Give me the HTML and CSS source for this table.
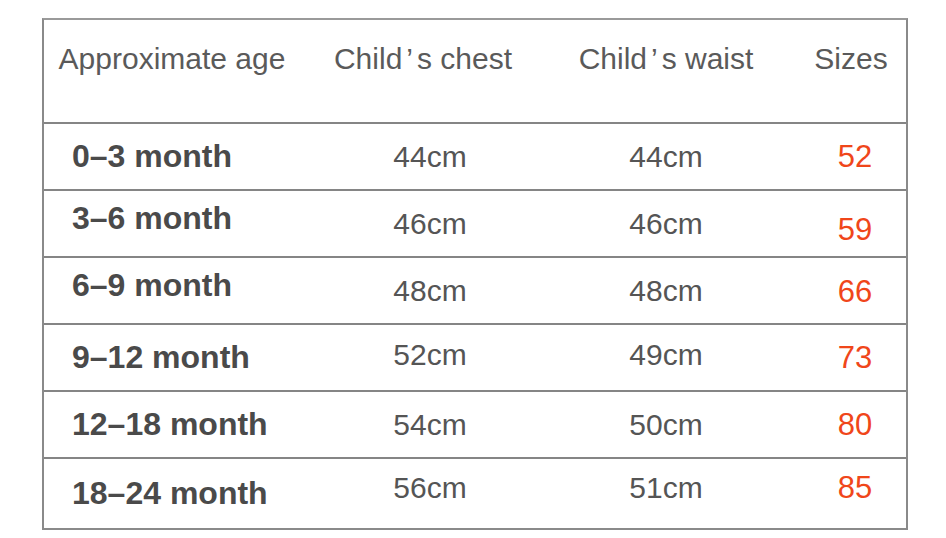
FILE: index.html
```html
<!DOCTYPE html>
<html lang="en">
<head>
<meta charset="utf-8">
<title>Size chart</title>
<link rel="stylesheet" href="styles.css">
</head>
<body>
<div class="chart">
  <div class="row head">
    <div class="cell c-age">Approximate age</div>
    <div class="cell c-chest">Child<span class="apos">’</span>s chest</div>
    <div class="cell c-waist">Child<span class="apos">’</span>s waist</div>
    <div class="cell c-size">Sizes</div>
  </div>
  <div class="row r1">
    <div class="cell c-age">0–3 month</div>
    <div class="cell c-chest">44cm</div>
    <div class="cell c-waist">44cm</div>
    <div class="cell c-size">52</div>
  </div>
  <div class="row r2">
    <div class="cell c-age">3–6 month</div>
    <div class="cell c-chest">46cm</div>
    <div class="cell c-waist">46cm</div>
    <div class="cell c-size">59</div>
  </div>
  <div class="row r3">
    <div class="cell c-age">6–9 month</div>
    <div class="cell c-chest">48cm</div>
    <div class="cell c-waist">48cm</div>
    <div class="cell c-size">66</div>
  </div>
  <div class="row r4">
    <div class="cell c-age">9–12 month</div>
    <div class="cell c-chest">52cm</div>
    <div class="cell c-waist">49cm</div>
    <div class="cell c-size">73</div>
  </div>
  <div class="row r5">
    <div class="cell c-age">12–18 month</div>
    <div class="cell c-chest">54cm</div>
    <div class="cell c-waist">50cm</div>
    <div class="cell c-size">80</div>
  </div>
  <div class="row r6">
    <div class="cell c-age">18–24 month</div>
    <div class="cell c-chest">56cm</div>
    <div class="cell c-waist">51cm</div>
    <div class="cell c-size">85</div>
  </div>
</div>
</body>
</html>
```

FILE: styles.css
```css
html, body {
  margin: 0;
  padding: 0;
  background: #ffffff;
}

body {
  font-family: "Liberation Sans", Arial, sans-serif;
  color: #555555;
}

.chart {
  margin: 18px 0 0 42px;
  width: 862px;
  border: 2px solid #8a8a8a;
  border-top-color: #9a9a9a;
}

.row {
  display: grid;
  grid-template-columns: 256px 246px 240px 1fr;
  height: 65px;
  border-bottom: 2px solid #858585;
  align-items: center;
}

.row:last-child {
  border-bottom: none;
  height: 69px;
}

.head {
  height: 102px;
  align-items: start;
}

.cell {
  white-space: nowrap;
}

.c-age {
  font-size: 32px;
  font-weight: bold;
  color: #4a4a4a;
  padding-left: 28px;
}

.c-chest, .c-waist {
  font-size: 30px;
  text-align: center;
  color: #555555;
}

.c-chest {
  padding-left: 14px;
}

.c-size {
  font-size: 31px;
  color: #f0461a;
  text-align: center;
  padding-left: 18px;
}

.head .cell {
  padding-top: 21px;
  padding-left: 0;
  font-size: 30px;
  font-weight: normal;
  line-height: 35px;
  color: #5a5a5a;
  text-align: center;
}

.head .c-size {
  padding-left: 10px;
}

.apos {
  padding: 0 4px;
}

.r2 .c-age { margin-top: -10px; }
.r2 .c-size { margin-top: 12px; }
.r3 .c-age { margin-top: -10px; }
.r3 .c-size { margin-top: 3px; }
.r4 .c-chest, .r4 .c-waist { margin-top: -6px; }
.r6 .c-chest, .r6 .c-waist, .r6 .c-size { margin-top: -12px; }
```
